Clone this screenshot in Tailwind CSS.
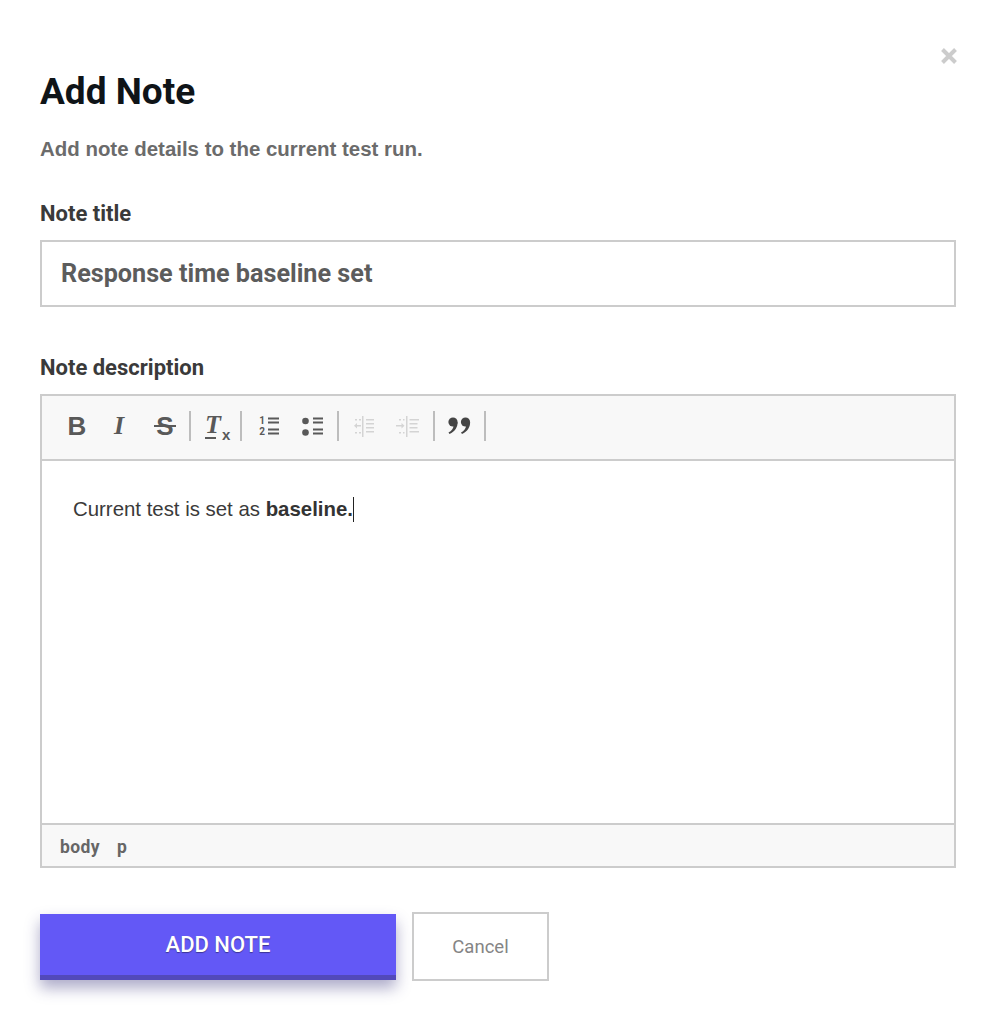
<!DOCTYPE html>
<html lang="en">
<head>
    <meta charset="UTF-8">
    <meta name="viewport" content="width=device-width, initial-scale=1.0">
    <title>Add Note</title>
    <script src="https://cdn.jsdelivr.net/npm/@tailwindcss/browser@4"></script>
</head>
<body class="bg-white font-['Roboto',sans-serif] h-[1024px] overflow-hidden relative">
    <button class="absolute left-[940px] top-[47px] w-[18px] h-[18px]">
        <svg viewBox="0 0 18 18" class="w-[18px] h-[18px]"><path d="M2.500 2.500 15.500 15.500M15.500 2.500 2.500 15.500" stroke="#cccccc" stroke-width="4" fill="none"/></svg>
    </button>
    <div class="pl-[40px] pr-[36px] pt-[70px]">
        <h1 class="text-[37px] leading-[44px] font-bold text-[#0f1418]">Add Note</h1>
        <p class="mt-[23px] text-[20.450px] leading-[24px] font-bold font-['Liberation_Sans',sans-serif] text-[#6b6b6b]">Add note details to the current test run.</p>

        <label class="block mt-[40px] text-[22px] leading-[26px] font-bold text-[#3a3a3a]">Note title</label>
        <div class="mt-[13px] h-[67px] border-2 border-[#cccccc] flex items-center pl-[19px] text-[25.200px] font-bold text-[#5c5c5c]">Response time baseline set</div>

        <label class="block mt-[48px] text-[22px] leading-[26px] font-bold text-[#3a3a3a]">Note description</label>
        <div class="mt-[13px] h-[474px] border-2 border-[#cccccc] flex flex-col">
            <div class="h-[65px] bg-[#f8f8f8] border-b-2 border-[#cccccc] flex items-center pl-[25px] pb-[4px] text-[#595959] shrink-0">
                <span class="w-[20px] text-center text-[26px] font-bold font-['Liberation_Sans',sans-serif] leading-none">B</span>
                <span class="w-[20px] ml-[22px] text-center text-[26px] font-bold italic font-['Liberation_Serif',serif] leading-none">I</span>
                <span class="relative w-[22px] ml-[25px] text-center text-[26px] font-bold font-['Liberation_Sans',sans-serif] leading-none">S<span class="absolute left-0 right-0 top-[12px] h-[2px] bg-[#595959]"></span></span>
                <span class="w-[2px] h-[30px] bg-[#bdbdbd] ml-[13px]"></span>
                <span class="relative flex items-end w-[24px] ml-[14px] h-[24px] font-bold leading-none">
                    <span class="text-[26px] italic font-['Liberation_Serif',serif] w-[16px]">T</span>
                    <span class="text-[15px] font-['Liberation_Sans',sans-serif] ml-[1px] mb-[-4px]">x</span>
                    <span class="absolute left-0 bottom-[-1px] w-[11px] h-[2px] bg-[#595959]"></span>
                </span>
                <span class="w-[2px] h-[30px] bg-[#bdbdbd] ml-[11px]"></span>
                <svg viewBox="0 0 24 24" class="w-[24px] h-[24px] ml-[15px]" fill="#595959"><text x="5" y="10" text-anchor="middle" font-family="Roboto" font-weight="700" font-size="10">1</text><text x="5" y="21" text-anchor="middle" font-family="Roboto" font-weight="700" font-size="10">2</text><path d="M11 3.500H22V5.500H11ZM11 7.500H22V9.500H11ZM11 14.500H22V16.500H11ZM11 18.500H22V20.500H11Z"/></svg>
                <svg viewBox="0 0 24 24" class="w-[24px] h-[24px] ml-[19px]" fill="#595959"><circle cx="5.500" cy="7" r="3.300"/><circle cx="5.500" cy="18.500" r="3.300"/><path d="M13 3.500H23V5.500H13ZM13 7.500H23V9.500H13ZM13 14.500H23V16.500H13ZM13 18.500H23V20.500H13Z"/></svg>
                <span class="w-[2px] h-[30px] bg-[#bdbdbd] ml-[13px]"></span>
                <svg viewBox="0 0 24 24" class="w-[24px] h-[24px] ml-[13px]" fill="#d4d4d4"><path d="M10 2H11.500V23H10ZM14 5H22V6.500H14ZM14 9H22V10.500H14ZM14 13H22V14.500H14ZM14 17H22V18.500H14ZM3 5H5V6.500H3ZM7 5H9V6.500H7ZM3 18H5V19.500H3ZM7 18H9V19.500H7ZM2 11.700 5 9V11H9V12.500H5V14.500Z"/></svg>
                <svg viewBox="0 0 24 24" class="w-[24px] h-[24px] ml-[19px]" fill="#d4d4d4"><path d="M11 2H12.500V23H11ZM14.500 5H24V6.500H14.500ZM14.500 9H22.500V10.500H14.500ZM14.500 13H22.500V14.500H14.500ZM14.500 17H24V18.500H14.500ZM4 5H6V6.500H4ZM8 5H9.500V6.500H8ZM4 18H6V19.500H4ZM8 18H9.500V19.500H8ZM9.500 11.700 6.500 9V11H1V12.500H6.500V14.500Z"/></svg>
                <span class="w-[2px] h-[30px] bg-[#bdbdbd] ml-[14px]"></span>
                <svg viewBox="0 0 24 20" class="w-[24px] h-[20px] ml-[12px]" fill="#454545"><circle cx="6" cy="6" r="4.600"/><path d="M10.600 6C10.800 11 8 15.500 2.500 18L1.500 16.500C4.500 15 6.500 12.500 6.500 9.500Z"/><circle cx="18.500" cy="6" r="4.600"/><path d="M23.100 6C23.300 11 20.500 15.500 15 18L14 16.500C17 15 19 12.500 19 9.500Z"/></svg>
                <span class="w-[2px] h-[30px] bg-[#bdbdbd] ml-[13px]"></span>
            </div>
            <div class="flex-1 pl-[31px] pt-[35px] font-['Liberation_Sans',sans-serif] text-[20.400px] leading-[27px] text-[#3a3a3a]">
                <span>Current test is set as <b class="text-[#333333]">baseline.</b></span><span class="inline-block w-[1.500px] h-[25px] bg-[#222222] align-[-6px]"></span>
            </div>
            <div class="h-[43px] shrink-0 bg-[#f8f8f8] border-t-2 border-[#cccccc] flex items-center pl-[18px] pt-[4px] gap-[17px] text-[17.500px] font-bold text-[#666666] tracking-[0.4px]">
                <span>body</span><span>p</span>
            </div>
        </div>

        <div class="mt-[44px] flex items-start gap-[16px]">
            <button class="mt-[2px] w-[356px] h-[66px] bg-[#6358f6] border-b-[5px] border-[#5249b9] text-white text-[22px] font-medium shadow-[0_8px_14px_rgba(50,45,120,0.4)] [text-shadow:0_1px_1px_rgba(0,0,0,0.4)]">ADD NOTE</button>
            <button class="w-[137px] h-[69px] border-2 border-[#cccccc] pt-[2px] text-[18.500px] text-[#858585]">Cancel</button>
        </div>
    </div>
</body>
</html>
